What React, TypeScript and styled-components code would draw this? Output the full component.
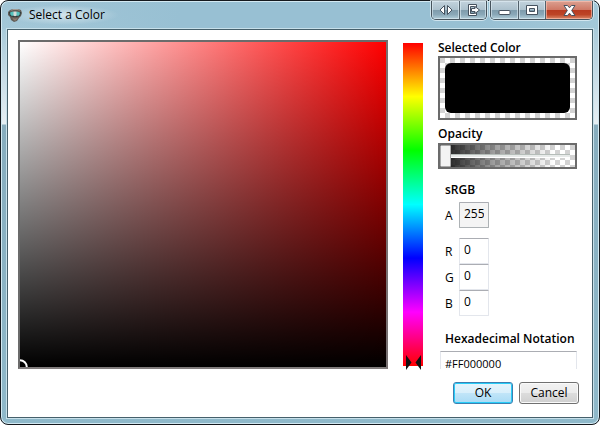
import React, { useState } from "react";
import styled, { createGlobalStyle } from "styled-components";

const GlobalStyle = createGlobalStyle`
  *, *::before, *::after { box-sizing: border-box; }
  body {
    margin: 0;
    background: #fff;
    color: #000;
    font: 12px/16px "Open Sans", "Noto Sans", sans-serif;
  }
  button, input { font: inherit; color: inherit; margin: 0; }
`;

const Window = styled.div`
  display: flex;
  flex-direction: column;
  min-height: 100vh;
  padding: 0 6px 6px;
  border: 1px solid #15191e;
  border-radius: 8px;
  background:
    linear-gradient(90deg, rgba(152, 192, 211, 0.3) 0, #98c0d3 30%, #98c0d3 80%, #a3c8d8 100%) 0 0 / 100% 28px no-repeat,
    linear-gradient(180deg, #a5c7d7 0, #a9cbda 28px, #c4dae5 70px, #e6eff4 123px, #87adbe 124px, #8fb9ca 100%);
  box-shadow: inset 0 0 0 1px #d3e9f2;
`;

const TitleBar = styled.header`
  display: flex;
  align-items: flex-start;
  justify-content: space-between;
  height: 28px;
`;

const Title = styled.h1`
  display: flex;
  align-items: center;
  gap: 6px;
  margin: 4px 0 0;
  padding-right: 14px;
  font-size: 12px;
  font-weight: 400;
  line-height: 20px;
  background: radial-gradient(closest-side, rgba(255, 255, 255, 0.55), rgba(255, 255, 255, 0));
`;

const Caption = styled.div`
  display: flex;
  gap: 3px;
`;

const CaptionGroup = styled.div`
  display: flex;
  height: 19px;
  border: 1px solid #46535c;
  border-top: 0;
  border-radius: 0 0 5px 5px;
  box-shadow: 0 0 0 1px rgba(225, 240, 247, 0.75);
  overflow: hidden;
`;

const CaptionButton = styled.button<{ $width: number; $danger?: boolean }>`
  display: flex;
  align-items: center;
  justify-content: center;
  width: ${(p) => p.$width}px;
  padding: 0;
  border: 0;
  box-shadow: inset 0 0 0 1px ${(p) => (p.$danger ? "rgba(255,200,185,0.6)" : "rgba(225,238,245,0.6)")};
  background: ${(p) =>
    p.$danger
      ? "linear-gradient(#dba091 0, #cf7966 48%, #b83a20 50%, #bd4426 75%, #d98868 100%)"
      : "linear-gradient(#c3d3dd 0, #acc1cd 48%, #7e9bab 50%, #8aa8b8 75%, #b2ced9 100%)"};
  & + & { border-left: 1px solid #52616b; }
`;

const Client = styled.main`
  flex: 1;
  display: flex;
  flex-direction: column;
  gap: 13px;
  padding: 10px 13px 13px 10px;
  border: 1px solid #46606b;
  outline: 1px solid #c7e0ea;
  background: #fff;
`;

const Picker = styled.div`
  flex: 1;
  display: flex;
  align-items: stretch;
`;

const ShadeField = styled.div<{ $hue: number }>`
  position: relative;
  flex: 1;
  min-width: 160px;
  border: 2px solid #6b6b6b;
  border-right-color: #777071;
  border-bottom-color: #807c7c;
  background:
    linear-gradient(rgba(0, 0, 0, 0), #000),
    linear-gradient(90deg, #fff, hsl(${(p) => p.$hue}, 100%, 50%));
  background-clip: padding-box;
  overflow: hidden;
`;

const ShadeMarker = styled.svg`
  position: absolute;
  left: -8px;
  bottom: -8px;
`;

const HueTrack = styled.div`
  position: relative;
  width: 20px;
  margin: 3px 15px 3px 15px;
  background: linear-gradient(#f00, #ff0 16.6%, #0f0 33.3%, #0ff 50%, #00f 66.6%, #f0f 83.3%, #f00);
`;

const HueInput = styled.input`
  position: absolute;
  inset: 0;
  width: 100%;
  height: 100%;
  opacity: 0;
  writing-mode: vertical-lr;
  direction: rtl;
`;

const HueMarker = styled.svg`
  position: absolute;
  left: 3px;
  margin-bottom: -4px;
`;

const Panel = styled.section`
  display: flex;
  flex-direction: column;
  width: 139px;
  margin-right: 2px;
`;

const Heading = styled.h2<{ $indent?: boolean }>`
  margin: 0;
  padding-left: ${(p) => (p.$indent ? 7 : 0)}px;
  font-size: 12px;
  font-weight: 600;
  line-height: 16px;
  white-space: nowrap;
`;

const Checkered = styled.div`
  border: 2px solid #6b6b6b;
  background: repeating-conic-gradient(#fff 0 25%, #d3d3d3 0 50%) 0 0 / 10px 10px;
  background-origin: padding-box;
`;

const Swatch = styled(Checkered)`
  height: 64px;
  margin-bottom: 6px;
  padding: 5px;
`;

const SwatchFill = styled.div`
  height: 100%;
  border-radius: 6px;
  background: #000;
`;

const OpacityBar = styled(Checkered)`
  display: flex;
  height: 26px;
  margin: 1px 0 13px;
`;

const OpacityInput = styled.input`
  flex: 1;
  min-width: 0;
  height: 22px;
  appearance: none;
  background: linear-gradient(90deg, #111, rgba(0, 0, 0, 0.38) 40%, transparent 85%);
  &::-webkit-slider-runnable-track {
    height: 22px;
    margin-right: 5px;
    background: linear-gradient(#b5bdb9 0 1px, #e7eae9 1px 3px, #fff 3px) 0 9px / 100% 4px no-repeat;
  }
  &::-webkit-slider-thumb {
    appearance: none;
    width: 11px;
    height: 22px;
    border: 1px solid #a9a9a9;
    border-radius: 1px;
    background: #f3f3f3;
  }
`;

const Channels = styled.div`
  display: flex;
  flex-direction: column;
  margin: 4px 0 12px 7px;
`;

const Channel = styled.label<{ $spaced?: boolean }>`
  display: flex;
  align-items: center;
  margin-bottom: ${(p) => (p.$spaced ? 10 : 0)}px;
  font-size: 12px;
`;

const ChannelName = styled.span`
  width: 14px;
  padding-top: 2px;
`;

const ChannelInput = styled.input<{ $active?: boolean }>`
  width: 30px;
  height: 26px;
  padding: 0 4px 3px;
  border: 1px solid ${(p) => (p.$active ? "#adb2b5" : "#e3e6ec")};
  border-top-color: #abadb3;
  border-radius: 1px;
  background: ${(p) => (p.$active ? "#f4f4f4" : "#fff")};
`;

const HexInput = styled.input`
  width: 137px;
  height: 18px;
  margin: 4px 0 0 2px;
  padding: 5px 4px 0;
  border: 1px solid #e3e6ec;
  border-top-color: #abadb3;
  border-bottom: 0;
  font-size: 11px;
`;

const HexGroup = styled.div`
  display: flex;
  flex-direction: column;
  margin-top: auto;
`;

const Actions = styled.footer`
  display: flex;
  justify-content: flex-end;
  gap: 6px;
`;

const ActionButton = styled.button<{ $primary?: boolean }>`
  width: 60px;
  height: 22px;
  padding: 0;
  border: 1px solid ${(p) => (p.$primary ? "#3c7fb1" : "#707070")};
  border-radius: 3px;
  box-shadow: inset 0 0 0 1px ${(p) => (p.$primary ? "#28cdf8" : "#fafafa")};
  background: ${(p) =>
    p.$primary
      ? "linear-gradient(#e6f4fc, #d8effb 48%, #c1e5f8 50%, #a9dbf5)"
      : "linear-gradient(#f2f2f2, #ebebeb 48%, #dddddd 50%, #cfcfcf)"};
  font-size: 12px;
  line-height: 18px;
`;

const AppIcon = () => (
  <svg width="16" height="14" viewBox="0 0 16 14" aria-hidden="true">
    <path d="M1 4 3 2 6 1h5l3 1 1 3-1 3-2 2-2 3-3 1-3-2-1-3-2-2z" fill="#5f5b56" />
    <path d="M2 4h12l-1 4-4 1-1-1-1 1-4-1z" fill="#29383a" />
    <path d="M3 4.5 6 3.5l1.5 1V7L5 8 3.5 7z" fill="#55c2be" />
    <path d="M13 4.5 10 3.5l-1.5 1V7L11 8l1.5-1z" fill="#55c2be" />
    <path d="M6.5 3.5h3V8h-3z" fill="#d3dcd9" />
    <path d="M3 3 6 1h5l2.5 2-3-1h-4z" fill="#a29a92" />
    <path d="m5 9.5 2 1h2l2-1-2 3H7z" fill="#8f7d6f" />
  </svg>
);

const glyph = { fill: "#fff", stroke: "#46525f", strokeWidth: 1 };

const ArrowsIcon = () => (
  <svg width="14" height="12" viewBox="0 0 14 12" aria-hidden="true">
    <path d="M5.5 1.5v9L1 6zM8.5 1.5v9L13 6z" {...glyph} />
  </svg>
);

const ExportIcon = () => (
  <svg width="13" height="12" viewBox="0 0 13 12" aria-hidden="true">
    <path d="M1.5.5h8v3h-2v-1h-4v7h4v-1h2v3h-8z" {...glyph} />
    <path d="M4.5 4.5H8v-2L12.5 6 8 9.5v-2H4.5z" {...glyph} />
  </svg>
);

const MinimizeIcon = () => (
  <svg width="13" height="12" viewBox="0 0 13 12" aria-hidden="true">
    <rect x="1" y="6.5" width="11" height="4" rx="1" {...glyph} />
  </svg>
);

const MaximizeIcon = () => (
  <svg width="12" height="10" viewBox="0 0 12 10" aria-hidden="true">
    <path d="M.5.5h11v9H.5zM3.5 3.5v3h5v-3z" fillRule="evenodd" {...glyph} />
  </svg>
);

const CloseIcon = () => (
  <svg width="13" height="11" viewBox="0 0 13 11" aria-hidden="true">
    <path d="M1 .5h3.5l2 2.3 2-2.3H12L8.7 5.5l3.3 5H8.5l-2-2.3-2 2.3H1l3.3-5z" {...glyph} />
  </svg>
);

const CHANNELS = ["R", "G", "B"];

export default function App() {
  const [hue, setHue] = useState(0);
  const [transparency, setTransparency] = useState(0);
  const alpha = 255 - transparency;
  const hex = "#" + alpha.toString(16).toUpperCase().padStart(2, "0") + "000000";

  return (
    <>
      <GlobalStyle />
      <Window>
        <TitleBar>
          <Title>
            <AppIcon />
            Select a Color
          </Title>
          <Caption>
            <CaptionGroup>
              <CaptionButton $width={27} aria-label="Switch monitor"><ArrowsIcon /></CaptionButton>
              <CaptionButton $width={27} aria-label="Send out"><ExportIcon /></CaptionButton>
            </CaptionGroup>
            <CaptionGroup>
              <CaptionButton $width={27} aria-label="Minimize"><MinimizeIcon /></CaptionButton>
              <CaptionButton $width={27} aria-label="Maximize"><MaximizeIcon /></CaptionButton>
              <CaptionButton $width={47} $danger aria-label="Close"><CloseIcon /></CaptionButton>
            </CaptionGroup>
          </Caption>
        </TitleBar>
        <Client>
          <Picker>
            <ShadeField $hue={hue}>
              <ShadeMarker width="16" height="16" viewBox="0 0 16 16" aria-hidden="true">
                <circle cx="8" cy="8" r="6.8" fill="none" stroke="#fff" strokeWidth="2" />
              </ShadeMarker>
            </ShadeField>
            <HueTrack>
              <HueInput
                type="range"
                min={0}
                max={360}
                value={hue}
                aria-label="Hue"
                onChange={(e) => setHue(Number(e.target.value))}
              />
              <HueMarker
                width="15"
                height="15"
                viewBox="0 0 15 15"
                aria-hidden="true"
                style={{ bottom: `${(hue / 360) * 100}%` }}
              >
                <path d="M0 0 5.5 7.5 0 15zM15 0 9.5 7.5 15 15z" fill="#111" />
              </HueMarker>
            </HueTrack>
            <Panel>
              <Heading>Selected Color</Heading>
              <Swatch>
                <SwatchFill style={{ opacity: alpha / 255 }} />
              </Swatch>
              <Heading>Opacity</Heading>
              <OpacityBar>
                <OpacityInput
                  type="range"
                  min={0}
                  max={255}
                  value={transparency}
                  aria-label="Opacity"
                  onChange={(e) => setTransparency(Number(e.target.value))}
                />
              </OpacityBar>
              <Heading $indent>sRGB</Heading>
              <Channels>
                <Channel $spaced>
                  <ChannelName>A</ChannelName>
                  <ChannelInput $active value={alpha} readOnly />
                </Channel>
                {CHANNELS.map((name) => (
                  <Channel key={name}>
                    <ChannelName>{name}</ChannelName>
                    <ChannelInput defaultValue="0" />
                  </Channel>
                ))}
              </Channels>
              <HexGroup>
                <Heading as="label" $indent htmlFor="hex">Hexadecimal Notation</Heading>
                <HexInput id="hex" value={hex} readOnly />
              </HexGroup>
            </Panel>
          </Picker>
          <Actions>
            <ActionButton $primary>OK</ActionButton>
            <ActionButton>Cancel</ActionButton>
          </Actions>
        </Client>
      </Window>
    </>
  );
}
